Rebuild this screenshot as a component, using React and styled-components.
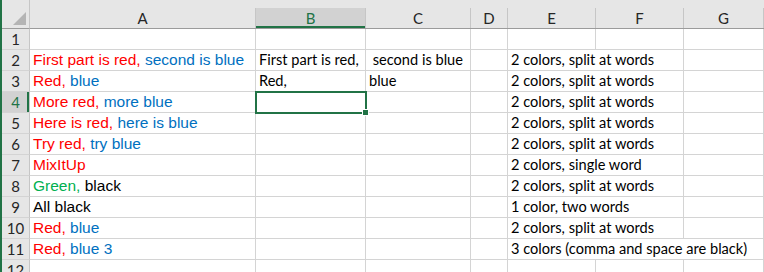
import React from 'react';
import styled, { createGlobalStyle } from 'styled-components';

const GlobalStyle = createGlobalStyle`
  html, body {
    margin: 0;
    padding: 0;
    background: #ffffff;
  }
`;

const RED = '#ff0000';
const BLUE = '#0070c0';
const GREEN = '#00b050';
const BLACK = '#000000';
const EXCEL_GREEN = '#217346';

const Page = styled.div`
  width: 764px;
  height: 272px;
  overflow: hidden;
  border-left: 2px solid ${EXCEL_GREEN};
  box-sizing: border-box;
  background: #fff;
`;

const Sheet = styled.div`
  display: grid;
  grid-template-columns: 28px 226px 110px 105px 37px 88px 88px 1fr;
  grid-template-rows: 29px;
  grid-auto-rows: 21px;
`;

const Corner = styled.div`
  background: #e6e6e6;
  border-right: 1px solid #c6c6c6;
  border-bottom: 1px solid #9b9b9b;
  box-sizing: border-box;
  display: flex;
  align-items: flex-end;
  justify-content: flex-end;
  padding: 0 3px 3px 0;
`;

const ColHead = styled.div`
  background: #e6e6e6;
  border-bottom: 1px solid #9b9b9b;
  box-sizing: border-box;
  display: flex;
  padding-top: 8px;
`;

const ColLabel = styled.div`
  flex: 1;
  display: flex;
  align-items: center;
  justify-content: center;
  border-right: 1px solid #c6c6c6;
  font-family: Lato, "Open Sans", sans-serif;
  font-size: 15px;
  color: ${p => (p.$active ? EXCEL_GREEN : '#262626')};
  background: ${p => (p.$active ? '#d2d2d2' : 'transparent')};
  box-shadow: ${p => (p.$active ? `inset 0 -2px 0 ${EXCEL_GREEN}` : 'none')};
`;

const RowHead = styled.div`
  background: ${p => (p.$active ? '#d2d2d2' : '#e6e6e6')};
  color: ${p => (p.$active ? EXCEL_GREEN : '#262626')};
  border-right: 1px solid #c6c6c6;
  border-bottom: 1px solid #d4d4d4;
  box-shadow: ${p => (p.$active ? `inset -2px 0 0 ${EXCEL_GREEN}` : 'none')};
  box-sizing: border-box;
  display: flex;
  align-items: center;
  justify-content: center;
  font-family: Lato, "Open Sans", sans-serif;
  font-size: 15px;
  line-height: 20px;
`;

const Cell = styled.div`
  position: relative;
  grid-column: span ${p => p.$span || 1};
  border-right: 1px solid #d4d4d4;
  border-bottom: 1px solid #d4d4d4;
  box-sizing: border-box;
  padding: 0 3px;
  white-space: pre;
  overflow: visible;
  line-height: 20px;
  font-family: ${p => (p.$arial ? '"Liberation Sans", Arial, sans-serif' : 'Lato, "Open Sans", sans-serif')};
  font-size: ${p => (p.$arial ? '15.5px' : '14.6px')};
  color: ${BLACK};
  outline: ${p => (p.$selected ? `2px solid ${EXCEL_GREEN}` : 'none')};
  outline-offset: -1px;
  z-index: ${p => (p.$selected ? 1 : 'auto')};
`;

const Handle = styled.span`
  position: absolute;
  right: -4px;
  bottom: -4px;
  width: 5px;
  height: 5px;
  background: ${EXCEL_GREEN};
  border: 1px solid #fff;
`;

const Part = styled.span`
  color: ${p => p.$color};
`;

const columns = ['A', 'B', 'C', 'D', 'E', 'F', 'G'];

const rp = (r, b) => [
  { t: r, c: RED },
  { t: b, c: BLUE },
];

const rows = [
  { n: 1, cells: [null, null, null, null, { span: 3 }] },
  {
    n: 2,
    a: rp('First part is red,', ' second is blue'),
    b: 'First part is red,',
    c: ' second is blue',
    e: '2 colors, split at words',
  },
  { n: 3, a: rp('Red,', ' blue'), b: 'Red,', c: 'blue', e: '2 colors, split at words' },
  { n: 4, a: rp('More red,', ' more blue'), e: '2 colors, split at words', selected: true },
  { n: 5, a: rp('Here is red,', ' here is blue'), e: '2 colors, split at words' },
  { n: 6, a: rp('Try red,', ' try blue'), e: '2 colors, split at words' },
  { n: 7, a: [{ t: 'MixItUp', c: RED }], e: '2 colors, single word' },
  { n: 8, a: [{ t: 'Green,', c: GREEN }, { t: ' black', c: BLACK }], e: '2 colors, split at words' },
  { n: 9, a: [{ t: 'All black', c: BLACK }], e: '1 color, two words' },
  { n: 10, a: rp('Red,', ' blue'), e: '2 colors, split at words' },
  { n: 11, a: rp('Red,', ' blue 3'), e: '3 colors (comma and space are black)', eSpan: 3 },
  { n: 12 },
];

function SheetRow({ row }) {
  const eSpan = row.e ? row.eSpan || 2 : 1;
  return (
    <>
      <RowHead $active={row.selected}>{row.n}</RowHead>
      <Cell $arial>
        {row.a && row.a.map((p, i) => (
          <Part key={i} $color={p.c}>{p.t}</Part>
        ))}
      </Cell>
      <Cell $selected={row.selected}>
        {row.b}
        {row.selected && <Handle />}
      </Cell>
      <Cell>{row.c}</Cell>
      <Cell />
      <Cell $span={eSpan}>{row.e}</Cell>
      {eSpan < 2 && <Cell />}
      {eSpan < 3 && <Cell />}
    </>
  );
}

export default function App() {
  return (
    <Page>
      <GlobalStyle />
      <Sheet>
        <Corner>
          <svg width="13" height="13" viewBox="0 0 13 13">
            <polygon points="13,0 13,13 0,13" fill="#b4b4b4" />
          </svg>
        </Corner>
        {columns.map(c => (
          <ColHead key={c}>
            <ColLabel $active={c === 'B'}>{c}</ColLabel>
          </ColHead>
        ))}
        {rows.map(r => (
          <SheetRow key={r.n} row={r} />
        ))}
      </Sheet>
    </Page>
  );
}
